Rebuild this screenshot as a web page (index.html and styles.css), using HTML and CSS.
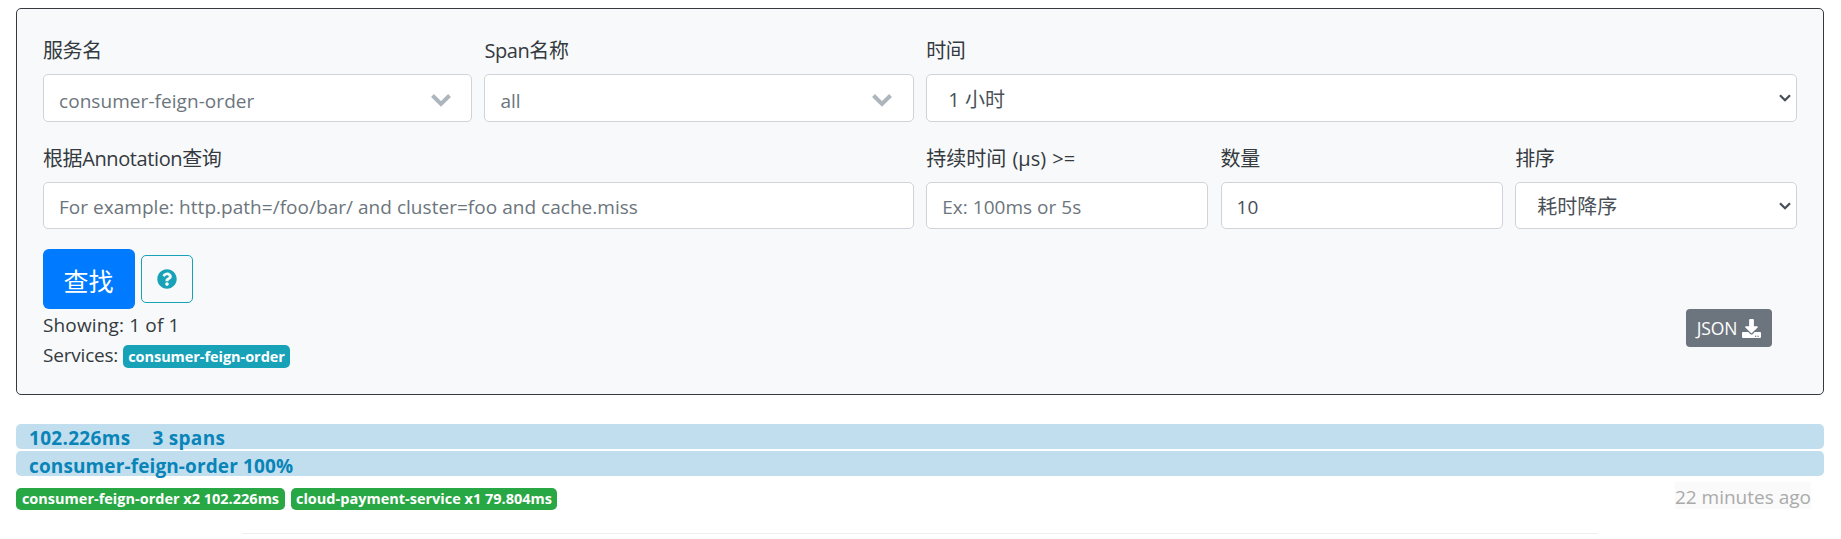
FILE: index.html
```html
<!DOCTYPE html>
<html lang="zh-CN">
<head>
<meta charset="utf-8">
<title>Zipkin</title>
<link rel="stylesheet" href="styles.css">
</head>
<body>
<main class="page">
  <form class="card">
    <div class="grid grid-top">
      <div class="field">
        <label class="label">服务名</label>
        <div class="control combo"><span class="combo-text">consumer-feign-order</span>
          <svg class="combo-arrow" viewBox="0 0 20 15"><path d="M1.500 2.500 L10 11 L18.500 2.500" fill="none" stroke="#adb5bd" stroke-width="4"/></svg></div>
      </div>
      <div class="field">
        <label class="label">Span名称</label>
        <div class="control combo"><span class="combo-text">all</span>
          <svg class="combo-arrow" viewBox="0 0 20 15"><path d="M1.500 2.500 L10 11 L18.500 2.500" fill="none" stroke="#adb5bd" stroke-width="4"/></svg></div>
      </div>
      <div class="field">
        <label class="label">时间</label>
        <select class="control select"><option>1 小时</option></select>
      </div>
    </div>
    <div class="grid grid-bottom">
      <div class="field">
        <label class="label">根据Annotation查询</label>
        <input class="control" type="text" placeholder="For example: http.path=/foo/bar/ and cluster=foo and cache.miss">
      </div>
      <div class="field">
        <label class="label label-duration">持续时间 (μs) &gt;=</label>
        <input class="control" type="text" placeholder="Ex: 100ms or 5s">
      </div>
      <div class="field">
        <label class="label">数量</label>
        <input class="control" type="text" value="10">
      </div>
      <div class="field">
        <label class="label">排序</label>
        <select class="control select"><option>耗时降序</option></select>
      </div>
    </div>
    <div class="actions">
      <button class="btn-find" type="button">查找</button>
      <button class="btn-help" type="button" aria-label="help"><svg class="help-icon" viewBox="0 0 512 512"><path fill="#17a2b8" d="M504 256c0 136.997-111.043 248-248 248S8 392.997 8 256C8 119.083 119.043 8 256 8s248 111.083 248 248zM262.655 90c-54.497 0-89.255 22.957-116.549 63.758-3.536 5.286-2.353 12.415 2.715 16.258l34.699 26.31c5.205 3.947 12.621 3.008 16.665-2.122 17.864-22.658 30.113-35.797 57.303-35.797 20.429 0 45.698 13.148 45.698 32.958 0 14.976-12.363 22.667-32.534 33.976C247.128 238.528 216 254.941 216 296v4c0 6.627 5.373 12 12 12h56c6.627 0 12-5.373 12-12v-1.333c0-28.462 83.186-29.647 83.186-106.667 0-58.002-60.165-102-116.531-102zM256 338c-25.365 0-46 20.635-46 46 0 25.364 20.635 46 46 46s46-20.636 46-46c0-25.365-20.635-46-46-46z"/></svg></button>
    </div>
    <div class="summary">
      <div class="summary-text">
        <div class="line"><span class="showing">Showing: 1 of 1</span></div>
        <div class="line"><span class="services">Services:</span><span class="badge badge-info">consumer-feign-order</span></div>
      </div>
      <button class="btn-json" type="button"><span>JSON</span><svg class="json-icon" viewBox="0 0 512 512"><path fill="#fff" d="M216 0h80c13.300 0 24 10.700 24 24v168h87.700c17.800 0 26.700 21.500 14.100 34.100L269.700 378.300c-7.500 7.500-19.800 7.500-27.300 0L90.100 226.100c-12.600-12.600-3.700-34.100 14.100-34.100H192V24c0-13.300 10.700-24 24-24zm296 376v112c0 13.300-10.700 24-24 24H24c-13.300 0-24-10.700-24-24V376c0-13.300 10.700-24 24-24h146.700l49 49c20.100 20.100 52.500 20.100 72.600 0l49-49H488c13.300 0 24 10.700 24 24zm-124 88c0-11-9-20-20-20s-20 9-20 20 9 20 20 20 20-9 20-20zm64 0c0-11-9-20-20-20s-20 9-20 20 9 20 20 20 20-9 20-20z"/></svg></button>
    </div>
  </form>
  <section class="trace">
    <div class="bar"><span>102.226ms</span><span>3 spans</span></div>
    <div class="bar bar-service"><span>consumer-feign-order 100%</span></div>
    <div class="trace-foot">
      <span class="badge badge-ok b-one">consumer-feign-order x2 102.226ms</span>
      <span class="badge badge-ok b-two">cloud-payment-service x1 79.804ms</span>
      <span class="ago">22 minutes ago</span>
    </div>
  </section>
  <hr class="rule">
</main>
</body>
</html>
```
FILE: styles.css
```css
* { box-sizing: border-box; }
body {
  margin: 0;
  background: #fff;
  color: #343a40;
  font: 19px/30px "Open Sans", "Noto Sans CJK SC", sans-serif;
}
.page { padding: 8px 17px 0 16px; overflow: hidden; height: 539px; }
.card {
  height: 387px;
  padding: 27px 26px 0;
  background: #f8f9fa;
  border: 1px solid #343a40;
  border-radius: 5px;
}
.grid { display: grid; column-gap: 12.5px; }
.grid-top { grid-template-columns: 428.9px 429.3px 1fr; }
.grid-bottom { grid-template-columns: 870.7px 281.9px 282.1px 1fr; margin-top: 22px; }
.label { display: block; height: 38px; font-size: 20px; line-height: 30px; letter-spacing: -0.4px; white-space: nowrap; }
.label-duration { letter-spacing: 0; word-spacing: 1px; }
.control {
  display: block;
  width: 100%;
  height: 47px;
  padding: 2px 15px 0;
  background: #fff;
  border: 1px solid #ced4da;
  border-radius: 5px;
  color: #495057;
  font: inherit;
  letter-spacing: 0.03px;
}
.grid-top .control { height: 48px; }
.control::placeholder { color: #6c757d; opacity: 1; }
.select {
  appearance: none;
  padding: 3px 21px 0;
  font-size: 20px;
  background: #fff url("data:image/svg+xml,%3Csvg xmlns='http://www.w3.org/2000/svg' width='12' height='8' viewBox='0 0 12 8'%3E%3Cpath d='M1 1.200L6 6.200L11 1.200' fill='none' stroke='%23495057' stroke-width='2.300'/%3E%3C/svg%3E") no-repeat right 5px center;
}
.combo { display: flex; align-items: center; justify-content: space-between; padding: 0 20px 0 15px; color: #6c757d; }
.grid-top .field:nth-child(2) .combo { padding-right: 21px; }
.combo-text { padding-top: 5px; letter-spacing: 0.06px; }
.combo-arrow { width: 20px; height: 15px; margin-top: 5px; }
.actions { display: flex; align-items: center; gap: 6px; margin-top: 20px; }
.btn-find {
  width: 92px; height: 60px; padding: 2px 1px 0 0;
  border: 0; border-radius: 6px;
  background: #007bff; color: #fff;
  font: 25px/38px "Noto Sans CJK SC", sans-serif;
}
.btn-help {
  display: flex; align-items: center; justify-content: center;
  width: 52px; height: 48px; padding: 0;
  border: 1px solid #17a2b8; border-radius: 5px; background: transparent;
}
.help-icon { width: 20px; height: 20px; }
.summary { display: flex; justify-content: space-between; padding-right: 25px; }
.line { display: flex; align-items: center; height: 30px; padding-top: 2px; }
.showing { letter-spacing: 0.15px; }
.services { width: 75px; letter-spacing: -0.2px; }
.badge {
  display: inline-flex; align-items: center; justify-content: center;
  height: 22px; border-radius: 5px; color: #fff;
  font-size: 14.5px; font-weight: 700; line-height: 22px; white-space: nowrap;
}
.badge-info { width: 167px; height: 23px; margin: 2px 0 0 5px; padding-top: 1px; letter-spacing: -0.05px; background: #17a2b8; }
.btn-json {
  display: flex; align-items: center; justify-content: center; gap: 5px;
  width: 86px; height: 38px; padding: 0;
  border: 0; border-radius: 4px; background: #6c757d; color: #fff;
  font: 17.500px/26px "Open Sans", sans-serif; letter-spacing: -0.1px;
}
.json-icon { width: 19px; height: 19px; }
.trace { display: flex; flex-direction: column; gap: 2px; margin-top: 29px; }
.bar {
  display: flex; gap: 22px; height: 25px; padding-left: 13px;
  border-radius: 5px; background: #c1deee; color: #0884b8;
  font-weight: 700; line-height: 29px; letter-spacing: 0.3px; white-space: nowrap;
}
.bar-service { line-height: 31px; letter-spacing: 0.12px; }
.trace-foot { display: flex; align-items: flex-start; gap: 6px; padding: 10px 13px 0 0; }
.badge-ok { background: #28a745; }
.b-one { width: 269px; }
.b-two { width: 266px; }
.ago { margin: -6px 0 0 auto; height: 27px; line-height: 30px; background: #fafafa; color: #aaa; }
.rule { width: 1356px; height: 1px; margin: 23px 0 0 226px; border: 0; background: #eee; }
```
